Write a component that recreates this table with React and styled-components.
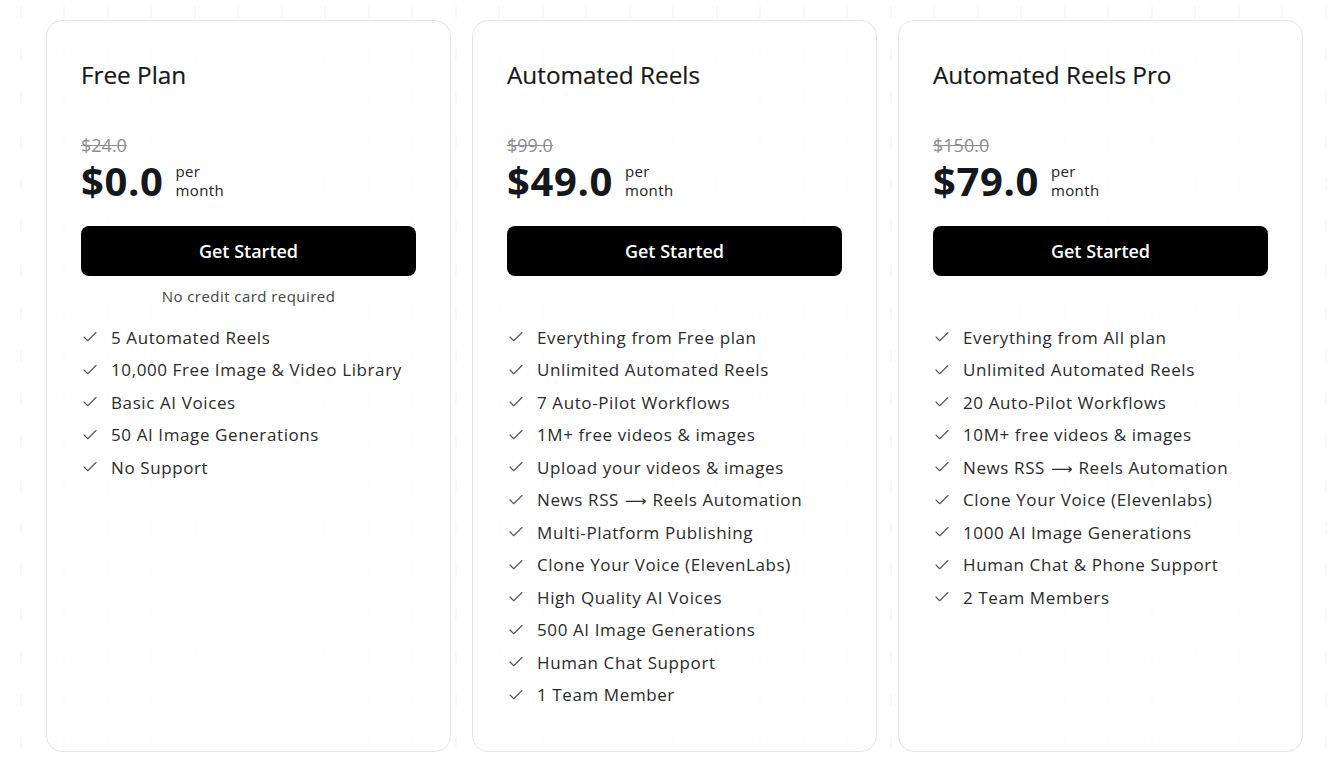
import React from 'react';
import styled, { createGlobalStyle } from 'styled-components';

const GlobalStyle = createGlobalStyle`
  html, body {
    margin: 0;
    padding: 0;
    background-color: #ffffff;
  }
  body {
    font-family: 'Open Sans', 'Noto Sans', sans-serif;
    color: #222;
    -webkit-font-smoothing: antialiased;
  }
`;

const Page = styled.div`
  position: relative;
  min-height: 757px;
  box-sizing: border-box;
  padding: 20px 40px 5px 46px;

  &::before {
    content: '';
    position: absolute;
    inset: 0;
    background-image: repeating-linear-gradient(
      90deg,
      transparent 0 20px,
      rgba(0, 0, 0, 0.028) 20px 22px,
      transparent 22px 43.5px
    );
    -webkit-mask-image: repeating-linear-gradient(
      180deg,
      transparent 0 6px,
      #000 6px 18px,
      transparent 18px 43px
    );
    mask-image: repeating-linear-gradient(
      180deg,
      transparent 0 6px,
      #000 6px 18px,
      transparent 18px 43px
    );
    pointer-events: none;
  }
`;

const Grid = styled.div`
  position: relative;
  display: grid;
  grid-template-columns: repeat(3, 405px);
  gap: 21px;
`;

const Card = styled.section`
  box-sizing: border-box;
  height: 732px;
  border: 1px solid #e5e5e5;
  border-radius: 16px;
  background: rgba(255, 255, 255, 0.75);
  padding: 42px 34px 30px 34px;
  display: flex;
  flex-direction: column;
`;

const Title = styled.h2`
  margin: 0;
  font-family: 'Open Sans', sans-serif;
  font-weight: 500;
  font-size: 24.3px;
  line-height: 24px;
  color: #171717;
  height: 24px;
  -webkit-text-stroke: 0.2px #171717;
`;

const OldPrice = styled.div`
  margin-top: 47px;
  font-size: 18px;
  line-height: 22px;
  color: #8c8c8c;
  text-decoration: line-through;
`;

const PriceRow = styled.div`
  display: flex;
  align-items: center;
  gap: 12px;
  margin-top: 4px;
  height: 42px;
`;

const Amount = styled.span`
  font-size: 40px;
  font-weight: 700;
  letter-spacing: 0.6px;
  line-height: 42px;
  color: #15171a;
`;

const Period = styled.span`
  font-size: 15px;
  letter-spacing: 0.4px;
  line-height: 19px;
  color: #222;
`;

const CTA = styled.button`
  margin-top: 24px;
  height: 50px;
  width: 100%;
  border: none;
  border-radius: 8px;
  background: #000;
  color: #fff;
  font-family: 'Open Sans', sans-serif;
  font-size: 18px;
  font-weight: 600;
  cursor: pointer;
`;

const Note = styled.div`
  height: 40px;
  text-align: center;
  font-size: 15px;
  letter-spacing: 0.45px;
  line-height: 40px;
  color: #444;
`;

const Features = styled.ul`
  list-style: none;
  margin: 5px 0 0;
  padding: 0;
`;

const Feature = styled.li`
  display: flex;
  align-items: center;
  gap: 12px;
  height: 32.5px;
  font-size: 17px;
  letter-spacing: 0.6px;
  color: #2a2a2a;
  white-space: nowrap;
`;

const Arrow = styled.span`
  font-family: 'DejaVu Sans', sans-serif;
  font-size: 15px;
  letter-spacing: 0;
  margin: 0 1px;
`;

const Check = () => (
  <svg width="18" height="18" viewBox="0 0 24 24" fill="none" stroke="#555" strokeWidth="1.5" strokeLinecap="round" strokeLinejoin="round">
    <path d="M20 6 9 17l-5-5" />
  </svg>
);

const plans = [
  {
    name: 'Free Plan',
    old: '$24.0',
    price: '$0.0',
    note: 'No credit card required',
    features: [
      '5 Automated Reels',
      '10,000 Free Image & Video Library',
      'Basic AI Voices',
      '50 AI Image Generations',
      'No Support',
    ],
  },
  {
    name: 'Automated Reels',
    old: '$99.0',
    price: '$49.0',
    features: [
      'Everything from Free plan',
      'Unlimited Automated Reels',
      '7 Auto-Pilot Workflows',
      '1M+ free videos & images',
      'Upload your videos & images',
      'News RSS \u2192 Reels Automation',
      'Multi-Platform Publishing',
      'Clone Your Voice (ElevenLabs)',
      'High Quality AI Voices',
      '500 AI Image Generations',
      'Human Chat Support',
      '1 Team Member',
    ],
  },
  {
    name: 'Automated Reels Pro',
    old: '$150.0',
    price: '$79.0',
    features: [
      'Everything from All plan',
      'Unlimited Automated Reels',
      '20 Auto-Pilot Workflows',
      '10M+ free videos & images',
      'News RSS \u2192 Reels Automation',
      'Clone Your Voice (Elevenlabs)',
      '1000 AI Image Generations',
      'Human Chat & Phone Support',
      '2 Team Members',
    ],
  },
];

function FeatureText({ text }) {
  const parts = text.split('\u2192');
  if (parts.length === 1) return <span>{text}</span>;
  return (
    <span>
      {parts[0]}
      <Arrow>{'\u27F6'}</Arrow>
      {parts[1]}
    </span>
  );
}

function PlanCard({ plan }) {
  return (
    <Card>
      <Title>{plan.name}</Title>
      <OldPrice>{plan.old}</OldPrice>
      <PriceRow>
        <Amount>{plan.price}</Amount>
        <Period>
          per
          <br />
          month
        </Period>
      </PriceRow>
      <CTA>Get Started</CTA>
      <Note>{plan.note}</Note>
      <Features>
        {plan.features.map((f) => (
          <Feature key={f}>
            <Check />
            <FeatureText text={f} />
          </Feature>
        ))}
      </Features>
    </Card>
  );
}

export default function App() {
  return (
    <>
      <GlobalStyle />
      <Page>
        <Grid>
          {plans.map((p) => (
            <PlanCard key={p.name} plan={p} />
          ))}
        </Grid>
      </Page>
    </>
  );
}
